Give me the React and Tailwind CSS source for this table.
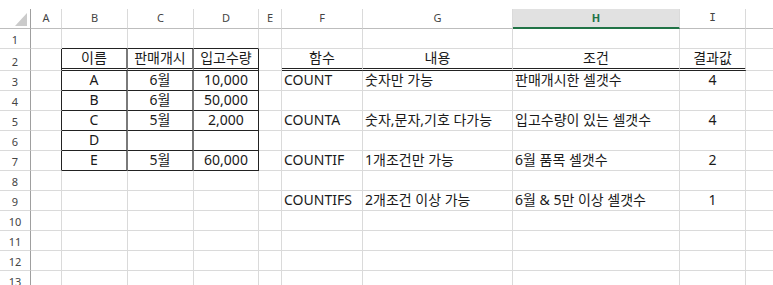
import React from 'react'

const COLS = ['A', 'B', 'C', 'D', 'E', 'F', 'G', 'H', 'I', '']
const ROWS = [1, 2, 3, 4, 5, 6, 7, 8, 9, 10, 11, 12, 13]

const cells = {
  2: { B: '이름', C: '판매개시', D: '입고수량', F: '함수', G: '내용', H: '조건', I: '결과값' },
  3: { B: 'A', C: '6월', D: '10,000', F: 'COUNT', G: '숫자만 가능', H: '판매개시한 셀갯수', I: '4' },
  4: { B: 'B', C: '6월', D: '50,000' },
  5: { B: 'C', C: '5월', D: '2,000', F: 'COUNTA', G: '숫자,문자,기호 다가능', H: '입고수량이 있는 셀갯수', I: '4' },
  6: { B: 'D' },
  7: { B: 'E', C: '5월', D: '60,000', F: 'COUNTIF', G: '1개조건만 가능', H: '6월 품목 셀갯수', I: '2' },
  9: { F: 'COUNTIFS', G: '2개조건 이상 가능', H: '6월 & 5만 이상 셀갯수', I: '1' },
}

const inTable = (c) => c === 'B' || c === 'C' || c === 'D'
const inFn = (c) => c === 'F' || c === 'G' || c === 'H' || c === 'I'

function rightBorder(r, c) {
  if (r >= 2 && r <= 7) {
    if (c === 'A' || c === 'D') return 'border-r border-r-[#222]'
    if (c === 'B' || c === 'C') return 'border-r-2 border-r-[#7a7a7a]'
  }
  if (c === '') return ''
  return 'border-r border-r-[#dadada]'
}

function bottomBorder(r, c) {
  if (r === 2 && (inTable(c) || inFn(c))) return 'border-b-[3px] border-double border-b-[#222]'
  if (inTable(c) && (r === 1 || (r >= 3 && r <= 7))) return 'border-b border-b-[#222]'
  return 'border-b border-b-[#dadada]'
}

function align(r, c) {
  if (r === 2 || inTable(c) || c === 'I') return 'justify-center'
  return 'justify-start pl-[2px]'
}

function Cell({ r, c }) {
  const text = cells[r] ? cells[r][c] : null
  return (
    <div
      className={`flex items-end overflow-visible whitespace-nowrap pb-[2px] ${r === 2 ? 'h-[22px]' : 'h-[20px]'} ${rightBorder(r, c)} ${bottomBorder(r, c)} ${align(r, c)}`}
    >
      {text && <span className="relative z-10 leading-[16px]">{text}</span>}
    </div>
  )
}

function ColHeader({ c }) {
  if (c === 'H') {
    return (
      <div className="flex h-[20px] items-center justify-center border-b-2 border-r border-b-[#217346] border-r-[#dadada] bg-[#e1e1e1] text-[11px] font-bold text-[#217346]">
        H
      </div>
    )
  }
  return (
    <div
      className={`flex h-[20px] items-center justify-center border-b border-b-[#bdbdbd] text-[11px] text-[#444] ${c === '' ? '' : 'border-r border-r-[#dadada]'} ${c === 'I' ? "font-['DejaVu_Sans_Mono',monospace]" : ''}`}
    >
      {c}
    </div>
  )
}

export default function App() {
  return (
    <div className="h-[285px] w-[773px] overflow-hidden bg-white font-['Noto_Sans','Noto_Sans_CJK_KR',sans-serif] text-[14px] text-[#1a1a1a]">
      <div className="h-[9px]" />
      <div className="grid grid-cols-[31px_31px_66px_66px_65px_23px_81px_150px_167px_66px_1fr]">
        <div className="h-[20px] border-b border-r border-b-[#bdbdbd] border-r-[#9f9f9f]">
          <svg width="30" height="19" viewBox="0 0 30 19">
            <polygon points="27,4 27,17 15,17" fill="#cbcbcb" />
          </svg>
        </div>
        {COLS.map((c) => (
          <ColHeader key={`h${c}`} c={c} />
        ))}

        {ROWS.map((r) => (
          <React.Fragment key={r}>
            <div
              className={`flex items-end justify-center border-b border-r border-b-[#dadada] border-r-[#9f9f9f] pb-[1px] text-[11px] text-[#444] ${r === 2 ? 'h-[22px]' : 'h-[20px]'}`}
            >
              <span className="leading-[14px]">{r}</span>
            </div>
            {COLS.map((c) => (
              <Cell key={`${r}${c}`} r={r} c={c} />
            ))}
          </React.Fragment>
        ))}
      </div>
    </div>
  )
}
